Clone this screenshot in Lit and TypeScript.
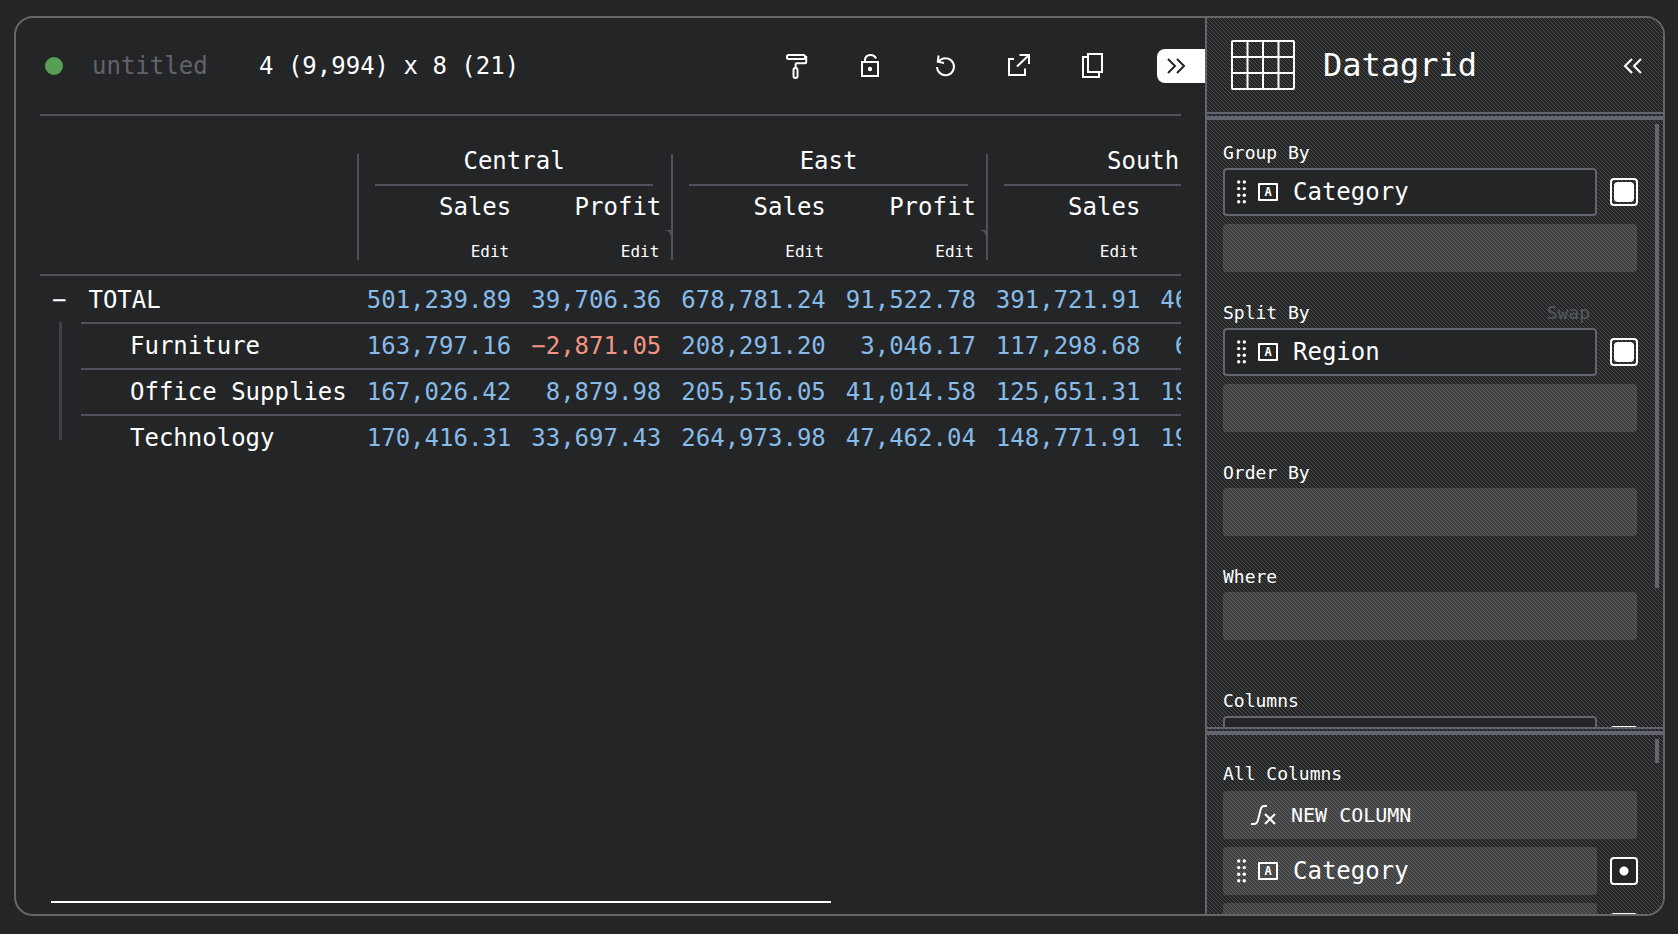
import { LitElement, html, css, svg, nothing } from "lit";
import { customElement, property } from "lit/decorators.js";

const REGIONS = ["Central", "East", "South"];

const ROWS: { label: string; values: string[] }[] = [
  { label: "TOTAL", values: ["501,239.89", "39,706.36", "678,781.24", "91,522.78", "391,721.91", "46,749.43"] },
  { label: "Furniture", values: ["163,797.16", "−2,871.05", "208,291.20", "3,046.17", "117,298.68", "6,771.21"] },
  { label: "Office Supplies", values: ["167,026.42", "8,879.98", "205,516.05", "41,014.58", "125,651.31", "19,986.39"] },
  { label: "Technology", values: ["170,416.31", "33,697.43", "264,973.98", "47,462.04", "148,771.91", "19,991.83"] },
];

const TOOLS = [
  {
    name: "Theme",
    icon: svg`<rect x="4" y="3" width="18" height="4" rx="1.5"/><path d="M22 5h1.2v5.2q0 1-1 1H13.6q-1 0-1 1V16"/><rect x="10.5" y="16" width="4" height="10" rx="2"/>`,
  },
  {
    name: "Unlock",
    icon: svg`<rect x="5" y="10" width="16" height="14"/><path d="M8 10V8.5Q8 3 13.500 3Q17.500 3 19 6.500"/><circle cx="13" cy="17" r="2.200" fill="currentColor" stroke="none"/>`,
  },
  {
    name: "Reset",
    icon: svg`<path d="M6 15A8.500 8.500 0 1 0 10 7.500L7 9.500"/><path d="M7.600 3.500L6.800 9.700L13 11"/>`,
  },
  {
    name: "Export",
    icon: svg`<path d="M9 7H4V23H20V16.500"/><path d="M12 14.500L23.500 3.500M14.500 3H24V12"/>`,
  },
  {
    name: "Copy",
    icon: svg`<path d="M9 5H4V25H20V20"/><rect x="9" y="2" width="14" height="18"/>`,
  },
];

@customElement("column-pill")
class ColumnPill extends LitElement {
  @property() name = "";
  @property({ type: Boolean }) active = false;
  @property({ type: Boolean }) checked = false;

  static styles = css`
    :host {
      display: grid;
      grid-template-columns: 1fr 28px;
      align-items: center;
      column-gap: 13px;
      margin-right: -1px;
      height: 48px;
    }
    .pill {
      box-sizing: border-box;
      height: 48px;
      display: flex;
      align-items: center;
      padding: 0 12px;
      border: 2px solid transparent;
      border-radius: 4px;
      background: #ffffff21;
    }
    .pill.active {
      background: #242526;
      border-color: #62646f;
    }
    .grip {
      width: 9px;
      height: 24px;
      margin-right: 12px;
      fill: #fff;
    }
    .type {
      width: 20px;
      height: 18px;
      box-sizing: border-box;
      border: 2px solid #fff;
      border-radius: 1px;
      margin-right: 15px;
      font-size: 12px;
      line-height: 14px;
      font-weight: 700;
      text-align: center;
    }
    .toggle {
      appearance: none;
      box-sizing: border-box;
      width: 28px;
      height: 28px;
      margin: 0;
      border: 2px solid #fff;
      border-radius: 4px;
      background: radial-gradient(circle, #fff 4px, #242526 5px);
    }
    .toggle:checked {
      padding: 2px;
      background: none;
      display: grid;
    }
    .toggle:checked::before {
      content: "";
      background: #fff;
      border-radius: 4px;
    }
  `;

  render() {
    return html`
      <div class="pill ${this.active ? "active" : ""}">
        ${this.name
          ? html`
              <svg class="grip" viewBox="0 0 9 24" aria-hidden="true">
                ${[2, 8.6, 15.2, 21.8].map(
                  (y) => svg`<circle cx="1.700" cy=${y} r="1.700"/><circle cx="7.300" cy=${y} r="1.700"/>`,
                )}
              </svg>
              <span class="type" aria-hidden="true">A</span>
              <span>${this.name}</span>
            `
          : nothing}
      </div>
      <input class="toggle" type="checkbox" aria-label="Use column ${this.name}" .checked=${this.checked} />
    `;
  }
}

@customElement("pivot-table")
class PivotTable extends LitElement {
  static styles = css`
    :host {
      display: block;
      overflow: hidden;
      --line: #51515d;
    }
    table {
      border-collapse: collapse;
      white-space: nowrap;
    }
    th,
    td {
      box-sizing: border-box;
      height: 46px;
      line-height: 46px;
      padding: 0 10px;
      font-weight: 400;
      text-align: right;
    }
    tbody th,
    tbody td {
      padding-top: 2px;
      line-height: 44px;
    }
    .group {
      text-align: center;
      background: linear-gradient(var(--line), var(--line)) 0 100% / 2px 30px no-repeat;
    }
    .measure {
      background: linear-gradient(var(--line), var(--line)) 0 0 / calc(100% - 18px) 2px no-repeat;
    }
    .measure.first {
      background:
        linear-gradient(var(--line), var(--line)) 0 0 / 2px 100% no-repeat,
        linear-gradient(var(--line), var(--line)) 18px 0 / 100% 2px no-repeat;
    }
    .edit {
      line-height: 44px;
      vertical-align: top;
    }
    .edit.first {
      background: linear-gradient(var(--line), var(--line)) 0 0 / 2px 30px no-repeat;
    }
    .edit.last {
      background: radial-gradient(circle at 0 100%, transparent 5px, var(--line) 6px) 100% 0 / 6px 6px no-repeat;
    }
    .edit-row {
      background: linear-gradient(var(--line), var(--line)) 0 100% / 100% 2px no-repeat;
    }
    .edit button {
      font: inherit;
      font-size: 16px;
      line-height: 44px;
      display: inline-block;
      vertical-align: top;
      color: #fff;
      background: none;
      border: 0;
      padding: 0 2px;
    }
    td {
      color: #87bbe8;
    }
    td.negative {
      color: #f39484;
    }
    .leaf td {
      background: linear-gradient(var(--line), var(--line)) 0 0 / 100% 2px no-repeat;
    }
    .leaf th {
      padding-left: 90px;
      text-align: left;
      background:
        linear-gradient(#404048, #404048) 19px 0 / 3px 100% no-repeat,
        linear-gradient(var(--line), var(--line)) 41px 0 / 100% 2px no-repeat;
    }
    .leaf:last-child th {
      background-size: 3px 26px, 100% 2px;
    }
    .total th {
      text-align: left;
    }
    .collapse {
      font: inherit;
      color: inherit;
      background: none;
      border: 0;
      padding: 0 2px;
      margin-right: 20px;
    }
  `;

  render() {
    return html`
      <table>
        <thead>
          <tr>
            <th></th>
            ${REGIONS.map((r) => html`<th class="group" colspan="2" scope="colgroup">${r}</th>`)}
          </tr>
          <tr>
            <th></th>
            ${REGIONS.map(
              () => html`<th class="measure first" scope="col">Sales</th><th class="measure last" scope="col">Profit</th>`,
            )}
          </tr>
          <tr class="edit-row">
            <th></th>
            ${REGIONS.map(
              () => html`<th class="edit first"><button>Edit</button></th><th class="edit last"><button>Edit</button></th>`,
            )}
          </tr>
        </thead>
        <tbody>
          ${ROWS.map(
            (row, i) => html`
              <tr class=${i ? "leaf" : "total"}>
                <th scope="row">${i ? nothing : html`<button class="collapse" aria-label="Collapse">−</button>`}${row.label}</th>
                ${row.values.map((v) => html`<td class=${v.startsWith("−") ? "negative" : ""}>${v}</td>`)}
              </tr>
            `,
          )}
        </tbody>
      </table>
    `;
  }
}

@customElement("app-root")
class AppRoot extends LitElement {
  static styles = css`
    :host {
      display: block;
      box-sizing: border-box;
      height: 100vh;
      padding: 16px 13px 18px 14px;
      background: #242526;
      color: #fff;
      font: 24px/28px "DejaVu Sans Mono", monospace;
    }
    .frame {
      box-sizing: border-box;
      height: 100%;
      display: grid;
      grid-template-columns: minmax(0, 1fr) 458px;
      border: 2px solid #666664;
      border-radius: 19px;
      overflow: hidden;
    }
    button {
      font: inherit;
      color: inherit;
      background: none;
      border: 0;
      padding: 0;
    }
    .main {
      display: flex;
      flex-direction: column;
      min-height: 0;
    }
    .toolbar {
      display: flex;
      align-items: center;
      height: 96px;
      padding-left: 29px;
    }
    .status {
      width: 18px;
      height: 18px;
      border-radius: 50%;
      background: #56a055;
      margin-right: 29px;
    }
    .title {
      font: inherit;
      color: #62626d;
      background: none;
      border: 0;
      padding: 0;
      margin-right: 27px;
      width: 140px;
    }
    .tools {
      display: flex;
      gap: 46px;
      margin-left: auto;
      margin-right: 50px;
    }
    .tool,
    .tool svg {
      display: block;
      width: 28px;
      height: 28px;
    }
    svg {
      fill: none;
      stroke: currentColor;
      stroke-width: 2;
    }
    .tab {
      width: 48px;
      height: 34px;
      display: flex;
      align-items: center;
      padding-left: 10px;
      border-radius: 8px 0 0 8px;
      background: #fff;
      color: #242526;
    }
    .rule {
      height: 2px;
      flex: none;
      margin: 0 24px 22px;
      background: #51515d;
    }
    pivot-table {
      flex: 1;
      margin: 0 24px;
    }
    .scroll {
      height: 2px;
      margin: 0 40px 11px 35px;
    }
    .thumb {
      width: 70%;
      height: 2px;
      background: #fff;
    }
    .side {
      --rule: #62646f;
      display: flex;
      flex-direction: column;
      min-height: 0;
      border-left: 2px solid var(--rule);
      background-color: #242526;
      background-image: url("data:image/svg+xml,%3Csvg xmlns='http://www.w3.org/2000/svg' width='4' height='4' shape-rendering='crispEdges' fill='%234c4e4c'%3E%3Cpath d='M0 0h1v1H0zM1 1h1v1H1zM2 2h1v1H2zM3 3h1v1H3z'/%3E%3C/svg%3E");
    }
    .plugin {
      display: flex;
      align-items: center;
      height: 94px;
      flex: none;
      padding: 0 21px 0 24px;
    }
    .plugin-icon {
      width: 64px;
      height: 50px;
      margin-right: 28px;
    }
    .plugin-name {
      flex: 1;
      margin: 0;
      font-size: 32px;
      line-height: 40px;
      font-weight: 400;
    }
    .chevron {
      display: block;
      width: 19px;
      height: 18px;
    }
    .divider {
      flex: none;
      height: 2px;
      border-top: 2px solid var(--rule);
      border-bottom: 4px solid var(--rule);
    }
    .pane {
      display: flex;
      justify-content: space-between;
      overflow: hidden;
      min-height: 0;
      padding: 0 4px 0 16px;
    }
    .settings {
      flex: 1;
    }
    .all {
      flex: 0 0 179px;
    }
    .fields {
      flex: 1;
      margin-right: 18px;
      padding-top: 23px;
    }
    .all .fields {
      padding-top: 29px;
    }
    .bar {
      flex: none;
      width: 4px;
      height: 464px;
      margin-top: 4px;
      background: var(--rule);
    }
    .all .bar {
      height: 24px;
    }
    section {
      display: grid;
      row-gap: 8px;
      margin-bottom: 31px;
    }
    .where {
      margin-bottom: 51px;
    }
    .label {
      display: flex;
      justify-content: space-between;
      margin: 0 0 -3px;
      font-size: 18px;
      line-height: 20px;
      font-weight: 400;
    }
    .all .label {
      margin-bottom: -1px;
    }
    .swap {
      margin-right: 47px;
      color: #565862;
    }
    .drop {
      height: 48px;
      border-radius: 4px;
      background: #ffffff21;
    }
    .new {
      display: flex;
      align-items: center;
      padding-left: 27px;
      font-size: 20px;
      gap: 15px;
    }
    .new svg {
      width: 26px;
      height: 22px;
    }
  `;

  render() {
    return html`
      <div class="frame">
        <main class="main">
          <header class="toolbar">
            <span class="status"></span>
            <input class="title" aria-label="Title" value="untitled" />
            <span>4 (9,994) x 8 (21)</span>
            <div class="tools">
              ${TOOLS.map(
                (t) => html`<button class="tool" aria-label=${t.name}><svg viewBox="0 0 28 28">${t.icon}</svg></button>`,
              )}
            </div>
            <button class="tab" aria-label="Hide settings">
              <svg class="chevron" viewBox="0 0 19 18"><path d="M1 2L8 9L1 16M10 2L17 9L10 16" /></svg>
            </button>
          </header>
          <div class="rule"></div>
          <pivot-table></pivot-table>
          <div class="scroll"><div class="thumb"></div></div>
        </main>
        <aside class="side">
          <header class="plugin">
            <svg class="plugin-icon" viewBox="0 0 64 50">
              <rect x="1" y="1" width="62" height="48" rx="1" />
              <path d="M16.500 1V49M32 1V49M47.500 1V49M1 17H63M1 33H63" />
            </svg>
            <h1 class="plugin-name">Datagrid</h1>
            <button aria-label="Select plugin">
              <svg class="chevron" viewBox="0 0 19 18"><path d="M9 3L2 10L9 17M18 3L11 10L18 17" /></svg>
            </button>
          </header>
          <div class="divider"></div>
          <div class="pane settings">
            <div class="fields">
              <section>
                <h2 class="label">Group By</h2>
                <column-pill name="Category" active checked></column-pill>
                <div class="drop"></div>
              </section>
              <section>
                <h2 class="label">Split By <button class="swap">Swap</button></h2>
                <column-pill name="Region" active checked></column-pill>
                <div class="drop"></div>
              </section>
              <section>
                <h2 class="label">Order By</h2>
                <div class="drop"></div>
              </section>
              <section class="where">
                <h2 class="label">Where</h2>
                <div class="drop"></div>
              </section>
              <section>
                <h2 class="label">Columns</h2>
                <column-pill active></column-pill>
              </section>
            </div>
            <div class="bar"></div>
          </div>
          <div class="divider"></div>
          <div class="pane all">
            <div class="fields">
              <section>
                <h2 class="label">All Columns</h2>
                <button class="drop new">
                  <svg viewBox="0 0 26 22" aria-hidden="true">
                    <path d="M1 20H4Q7 20 8 16L10.500 6Q11.500 2 14 2H17M15 10L25 20M25 10L15 20" />
                  </svg>
                  NEW COLUMN
                </button>
                <column-pill name="Category"></column-pill>
                <column-pill></column-pill>
              </section>
            </div>
            <div class="bar"></div>
          </div>
        </aside>
      </div>
    `;
  }
}
